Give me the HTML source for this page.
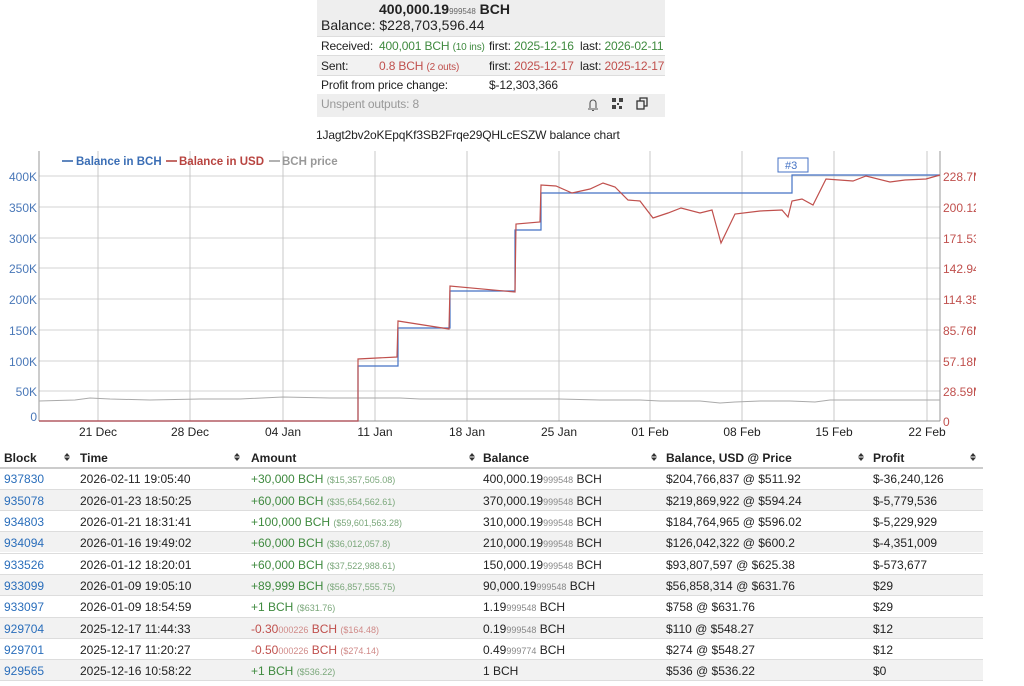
<!DOCTYPE html>
<html><head><meta charset="utf-8">
<style>
*{margin:0;padding:0;box-sizing:border-box}
body{width:1024px;height:686px;background:#fff;font-family:"Liberation Sans",Arial,sans-serif;font-size:12px;color:#222;position:relative;overflow:hidden}
.a{position:absolute;white-space:nowrap}
.t{letter-spacing:-0.15px}
.g{color:#3f8a3f}.r{color:#c0504d}.sm{font-size:9px;color:#888}
.gs{font-size:9px;color:#7aa77a}.rs{font-size:9px;color:#d08a88}
.b{color:#2a6ebb}
.row{position:absolute;left:0;width:983px;height:21px;border-top:1px solid #ddd}
.row span{position:absolute;top:4px;white-space:nowrap}
</style></head><body>
<!-- summary box -->
<div class="a" style="left:317px;top:0;width:348px;height:36px;background:#eee"></div>
<div class="a" style="left:379px;top:1px;font-size:14px;font-weight:bold">400,000.19<span style="font-size:8px;font-weight:normal;color:#666">999548</span> BCH</div>
<div class="a" style="left:321px;top:17px;font-size:14px">Balance: $228,703,596.44</div>
<div class="a" style="left:317px;top:36px;width:348px;height:19px;border-top:1px solid #ddd"></div>
<div class="a t" style="left:321px;top:39px">Received:</div>
<div class="a g t" style="left:379px;top:39px">400,001 BCH <span style="font-size:10px">(10 ins)</span></div>
<div class="a t" style="left:489px;top:39px">first: <span class="g">2025-12-16</span></div>
<div class="a t" style="left:580px;top:39px">last: <span class="g">2026-02-11</span></div>
<div class="a" style="left:317px;top:55px;width:348px;height:20px;background:#f2f2f2;border-top:1px solid #ddd"></div>
<div class="a t" style="left:321px;top:59px">Sent:</div>
<div class="a r t" style="left:379px;top:59px">0.8 BCH <span style="font-size:10px">(2 outs)</span></div>
<div class="a t" style="left:489px;top:59px">first: <span class="r">2025-12-17</span></div>
<div class="a t" style="left:580px;top:59px">last: <span class="r">2025-12-17</span></div>
<div class="a" style="left:317px;top:75px;width:348px;height:19px;border-top:1px solid #ddd"></div>
<div class="a t" style="left:321px;top:78px">Profit from price change:</div>
<div class="a t" style="left:489px;top:78px">$-12,303,366</div>
<div class="a" style="left:317px;top:94px;width:348px;height:23px;background:#eee"></div>
<div class="a t" style="left:321px;top:97px;color:#999">Unspent outputs: 8</div>
<svg class="a" style="left:582px;top:95px" width="70" height="18" viewBox="0 0 70 18">
<path d="M6 14h10M8 13V8a3 3 0 0 1 6 0v5M10 15.5h2" fill="none" stroke="#555" stroke-width="1.1"/>
<g fill="#444"><rect x="30" y="3" width="4" height="4"/><rect x="37" y="3" width="4" height="4"/><rect x="30" y="10" width="4" height="4"/><rect x="35" y="8" width="2" height="2"/><rect x="37" y="11" width="3" height="3"/></g>
<rect x="55" y="6" width="7" height="8" fill="none" stroke="#333" stroke-width="1.3"/><path d="M58 6V3h7v8h-3" fill="none" stroke="#333" stroke-width="1.3"/>
</svg>
<div class="a t" style="left:316px;top:128px">1Jagt2bv2oKEpqKf3SB2Frqe29QHLcESZW balance chart</div>
<!-- chart -->
<svg class="a" style="left:0;top:145px" width="976" height="300" viewBox="0 145 976 300" font-family="Liberation Sans, Arial, sans-serif" font-size="12">
<g stroke="#dcdcdc" stroke-width="1.3">
<line x1="39" y1="176" x2="940" y2="176"/><line x1="39" y1="207" x2="940" y2="207"/><line x1="39" y1="238" x2="940" y2="238"/><line x1="39" y1="268" x2="940" y2="268"/><line x1="39" y1="299" x2="940" y2="299"/><line x1="39" y1="330" x2="940" y2="330"/><line x1="39" y1="361" x2="940" y2="361"/><line x1="39" y1="391" x2="940" y2="391"/>
</g>
<g stroke="#c8c8c8" stroke-width="1">
<line x1="98" y1="151" x2="98" y2="421"/><line x1="190" y1="151" x2="190" y2="421"/><line x1="283" y1="151" x2="283" y2="421"/><line x1="375" y1="151" x2="375" y2="421"/><line x1="467" y1="151" x2="467" y2="421"/><line x1="559" y1="151" x2="559" y2="421"/><line x1="650" y1="151" x2="650" y2="421"/><line x1="742" y1="151" x2="742" y2="421"/><line x1="834" y1="151" x2="834" y2="421"/><line x1="927" y1="151" x2="927" y2="421"/>
</g>
<line x1="39" y1="151" x2="39" y2="421" stroke="#999"/>
<line x1="940" y1="151" x2="940" y2="421" stroke="#999"/>
<line x1="39" y1="421" x2="940" y2="421" stroke="#999"/>
<polyline fill="none" stroke="#aaa" stroke-width="1" points="39,401 75,400 90,398 110,399 150,400 200,399 240,399 283,397 330,398 375,398 400,398 420,399 467,399 520,399 559,399 600,400 640,400 660,401 700,401 720,403 735,402 760,401 790,401 815,402 830,400 870,400 940,400"/>
<polyline fill="none" stroke="#4472c4" stroke-width="1.2" points="39,421 358,421 358,366 398,366 398,328 450,328 450,291 515,291 515,230 541,230 541,193 792,193 792,175 940,175"/>
<polyline fill="none" stroke="#c0504d" stroke-width="1.2" points="39,421 358,421 358,359 397,357 398,321 449,329 450,286 515,292 516,224 540,222 541,185 556,186 572,193 590,189 603,183 615,187 628,200 640,201 653,218 668,213 681,208 700,213 712,210 721,243 735,214 760,211 782,210 788,217 792,201 802,199 813,205 826,179 853,181 866,176 890,182 905,180 926,179 940,175"/>
<rect x="778" y="158" width="30" height="14" fill="#fff" stroke="#4472c4"/>
<text x="785" y="169" fill="#4472c4" font-size="11">#3</text>
<g fill="#4a78b8" text-anchor="end">
<text x="37" y="181">400K</text><text x="37" y="212">350K</text><text x="37" y="243">300K</text><text x="37" y="273">250K</text><text x="37" y="304">200K</text><text x="37" y="335">150K</text><text x="37" y="366">100K</text><text x="37" y="396">50K</text><text x="37" y="421">0</text>
</g>
<g fill="#c0504d">
<text x="943" y="181">228.7M</text><text x="943" y="212">200.12</text><text x="943" y="243">171.53</text><text x="943" y="273">142.94</text><text x="943" y="304">114.35</text><text x="943" y="335">85.76M</text><text x="943" y="366">57.18M</text><text x="943" y="396">28.59M</text><text x="943" y="426">0</text>
</g>
<g fill="#222" text-anchor="middle">
<text x="98" y="436">21 Dec</text><text x="190" y="436">28 Dec</text><text x="283" y="436">04 Jan</text><text x="375" y="436">11 Jan</text><text x="467" y="436">18 Jan</text><text x="559" y="436">25 Jan</text><text x="650" y="436">01 Feb</text><text x="742" y="436">08 Feb</text><text x="834" y="436">15 Feb</text><text x="927" y="436">22 Feb</text>
</g>
<g font-weight="bold" font-size="11.5">
<line x1="62" y1="161" x2="73" y2="161" stroke="#2a5fa8" stroke-width="1.5"/><text x="76" y="165" fill="#3b6eb5">Balance in BCH</text>
<line x1="166" y1="161" x2="177" y2="161" stroke="#b03a36" stroke-width="1.5"/><text x="179" y="165" fill="#b84440">Balance in USD</text>
<line x1="269" y1="161" x2="280" y2="161" stroke="#999" stroke-width="1.5"/><text x="282" y="165" fill="#999">BCH price</text>
</g>
</svg>
<!-- table header -->
<div class="row" style="top:446px;border-top:none;font-weight:bold">
<span style="left:4px;top:5px">Block</span>
<span style="left:80px;top:5px">Time</span>
<span style="left:251px;top:5px">Amount</span>
<span style="left:483px;top:5px">Balance</span>
<span style="left:666px;top:5px">Balance, USD @ Price</span>
<span style="left:873px;top:5px">Profit</span>
</div>
<svg class="a" style="left:0;top:452px" width="1000" height="10">
<g fill="#333"><path d="M64 4.5l3-3.5 3 3.5zM64 5.5l3 3.5 3-3.5z"/><path d="M234 4.5l3-3.5 3 3.5zM234 5.5l3 3.5 3-3.5z"/><path d="M469 4.5l3-3.5 3 3.5zM469 5.5l3 3.5 3-3.5z"/><path d="M651 4.5l3-3.5 3 3.5zM651 5.5l3 3.5 3-3.5z"/><path d="M858 4.5l3-3.5 3 3.5zM858 5.5l3 3.5 3-3.5z"/><path d="M970 4.5l3-3.5 3 3.5zM970 5.5l3 3.5 3-3.5z"/></g>
</svg>
<div class="a" style="left:0;top:467px;width:983px;height:2px;background:#ccc"></div>
<div class="row" style="top:468px;border-top:none"><span class="b" style="left:4px">937830</span><span style="left:80px">2026-02-11 19:05:40</span><span class="g" style="left:251px">+30,000 BCH <i class="gs" style="font-style:normal">($15,357,505.08)</i></span><span style="left:483px">400,000.19<i class="sm" style="font-style:normal">999548</i> BCH</span><span style="left:666px">$204,766,837 @ $511.92</span><span style="left:873px">$-36,240,126</span></div>
<div class="row" style="top:489px;background:#f2f2f2"><span class="b" style="left:4px">935078</span><span style="left:80px">2026-01-23 18:50:25</span><span class="g" style="left:251px">+60,000 BCH <i class="gs" style="font-style:normal">($35,654,562.61)</i></span><span style="left:483px">370,000.19<i class="sm" style="font-style:normal">999548</i> BCH</span><span style="left:666px">$219,869,922 @ $594.24</span><span style="left:873px">$-5,779,536</span></div>
<div class="row" style="top:510px"><span class="b" style="left:4px">934803</span><span style="left:80px">2026-01-21 18:31:41</span><span class="g" style="left:251px">+100,000 BCH <i class="gs" style="font-style:normal">($59,601,563.28)</i></span><span style="left:483px">310,000.19<i class="sm" style="font-style:normal">999548</i> BCH</span><span style="left:666px">$184,764,965 @ $596.02</span><span style="left:873px">$-5,229,929</span></div>
<div class="row" style="top:531px;background:#f2f2f2"><span class="b" style="left:4px">934094</span><span style="left:80px">2026-01-16 19:49:02</span><span class="g" style="left:251px">+60,000 BCH <i class="gs" style="font-style:normal">($36,012,057.8)</i></span><span style="left:483px">210,000.19<i class="sm" style="font-style:normal">999548</i> BCH</span><span style="left:666px">$126,042,322 @ $600.2</span><span style="left:873px">$-4,351,009</span></div>
<div class="row" style="top:553px"><span class="b" style="left:4px">933526</span><span style="left:80px">2026-01-12 18:20:01</span><span class="g" style="left:251px">+60,000 BCH <i class="gs" style="font-style:normal">($37,522,988.61)</i></span><span style="left:483px">150,000.19<i class="sm" style="font-style:normal">999548</i> BCH</span><span style="left:666px">$93,807,597 @ $625.38</span><span style="left:873px">$-573,677</span></div>
<div class="row" style="top:574px;background:#f2f2f2"><span class="b" style="left:4px">933099</span><span style="left:80px">2026-01-09 19:05:10</span><span class="g" style="left:251px">+89,999 BCH <i class="gs" style="font-style:normal">($56,857,555.75)</i></span><span style="left:483px">90,000.19<i class="sm" style="font-style:normal">999548</i> BCH</span><span style="left:666px">$56,858,314 @ $631.76</span><span style="left:873px">$29</span></div>
<div class="row" style="top:595px"><span class="b" style="left:4px">933097</span><span style="left:80px">2026-01-09 18:54:59</span><span class="g" style="left:251px">+1 BCH <i class="gs" style="font-style:normal">($631.76)</i></span><span style="left:483px">1.19<i class="sm" style="font-style:normal">999548</i> BCH</span><span style="left:666px">$758 @ $631.76</span><span style="left:873px">$29</span></div>
<div class="row" style="top:617px;background:#f2f2f2"><span class="b" style="left:4px">929704</span><span style="left:80px">2025-12-17 11:44:33</span><span class="r" style="left:251px">-0.30<i class="rs" style="font-style:normal">000226</i> BCH <i class="rs" style="font-style:normal">($164.48)</i></span><span style="left:483px">0.19<i class="sm" style="font-style:normal">999548</i> BCH</span><span style="left:666px">$110 @ $548.27</span><span style="left:873px">$12</span></div>
<div class="row" style="top:638px"><span class="b" style="left:4px">929701</span><span style="left:80px">2025-12-17 11:20:27</span><span class="r" style="left:251px">-0.50<i class="rs" style="font-style:normal">000226</i> BCH <i class="rs" style="font-style:normal">($274.14)</i></span><span style="left:483px">0.49<i class="sm" style="font-style:normal">999774</i> BCH</span><span style="left:666px">$274 @ $548.27</span><span style="left:873px">$12</span></div>
<div class="row" style="top:659px;background:#f2f2f2;border-bottom:1px solid #ddd;height:22px"><span class="b" style="left:4px">929565</span><span style="left:80px">2025-12-16 10:58:22</span><span class="g" style="left:251px">+1 BCH <i class="gs" style="font-style:normal">($536.22)</i></span><span style="left:483px">1 BCH</span><span style="left:666px">$536 @ $536.22</span><span style="left:873px">$0</span></div>
</body></html>
